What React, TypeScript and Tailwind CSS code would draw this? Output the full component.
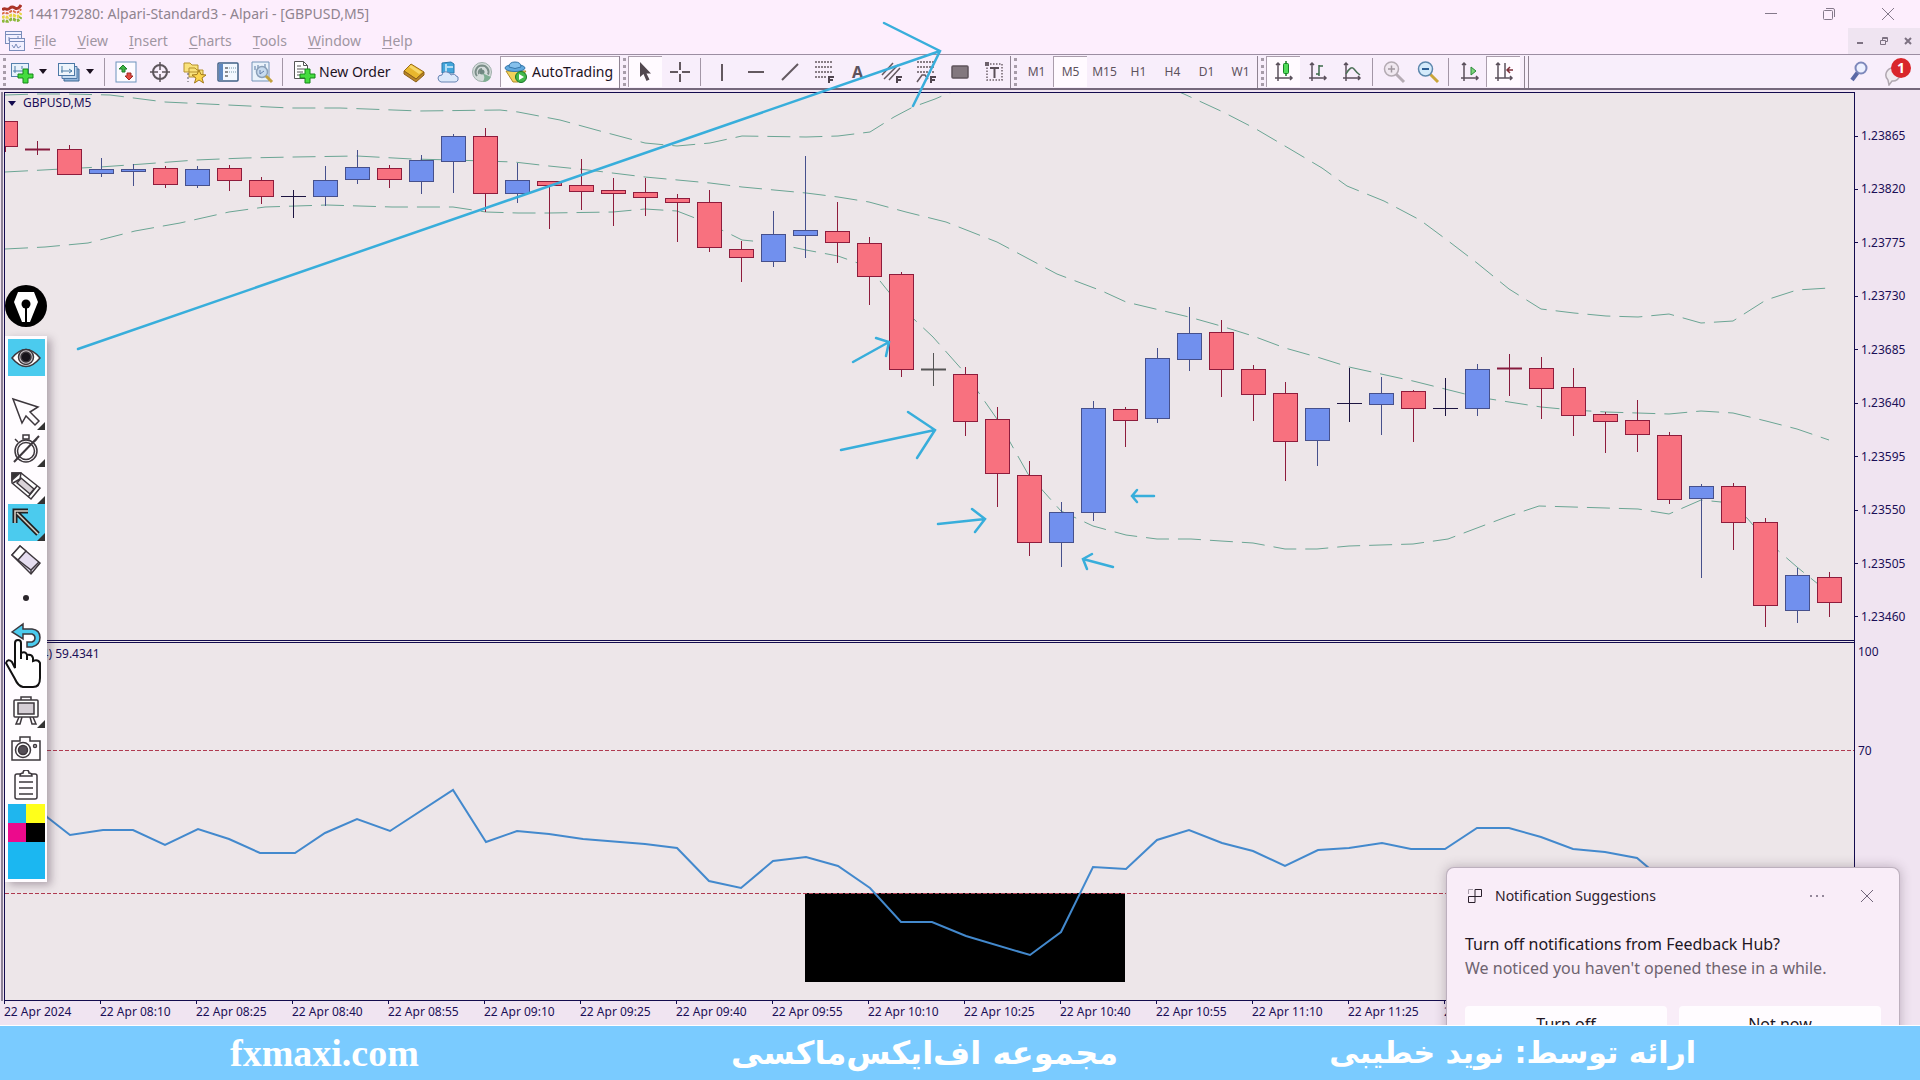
import React from 'react';

type Kind = 'up' | 'down' | 'flat' | 'grey' | 'redflat';

// kind, high, body top, body bottom, low
const CANDLES: [Kind, number, number, number, number][] = [
    ['down', 121, 121, 146, 152],
    ['redflat', 141, 149, 149, 155],
    ['down', 145, 149, 174, 174],
    ['up', 158, 169, 173, 177],
    ['up', 164, 169, 171, 186],
    ['down', 166, 168, 184, 188],
    ['up', 166, 169, 185, 188],
    ['down', 165, 168, 180, 191],
    ['down', 177, 180, 196, 204],
    ['flat', 190, 196, 196, 218],
    ['up', 166, 180, 196, 206],
    ['up', 150, 167, 179, 184],
    ['down', 165, 168, 179, 188],
    ['up', 155, 160, 181, 194],
    ['up', 134, 136, 161, 193],
    ['down', 128, 136, 193, 212],
    ['up', 163, 180, 193, 203],
    ['down', 181, 181, 185, 229],
    ['down', 159, 185, 191, 210],
    ['down', 178, 190, 193, 226],
    ['down', 178, 192, 197, 216],
    ['down', 194, 198, 202, 242],
    ['down', 190, 202, 247, 252],
    ['down', 241, 249, 257, 282],
    ['up', 211, 234, 261, 267],
    ['up', 156, 230, 235, 258],
    ['down', 202, 231, 242, 263],
    ['down', 237, 243, 276, 305],
    ['down', 272, 274, 369, 377],
    ['grey', 353, 369, 369, 386],
    ['down', 367, 374, 421, 436],
    ['down', 407, 419, 473, 507],
    ['down', 461, 475, 542, 556],
    ['up', 502, 512, 542, 567],
    ['up', 401, 408, 512, 521],
    ['down', 407, 409, 420, 447],
    ['up', 348, 358, 418, 423],
    ['up', 307, 333, 359, 371],
    ['down', 320, 332, 369, 397],
    ['down', 365, 369, 394, 421],
    ['down', 382, 393, 441, 481],
    ['up', 408, 408, 440, 466],
    ['flat', 368, 403, 403, 422],
    ['up', 377, 393, 404, 435],
    ['down', 390, 391, 408, 442],
    ['flat', 378, 408, 408, 416],
    ['up', 364, 369, 408, 416],
    ['redflat', 354, 368, 368, 396],
    ['down', 357, 368, 388, 419],
    ['down', 368, 387, 415, 436],
    ['down', 412, 414, 421, 453],
    ['down', 400, 420, 434, 452],
    ['down', 432, 435, 499, 504],
    ['up', 484, 486, 498, 578],
    ['down', 483, 486, 522, 550],
    ['down', 518, 522, 605, 627],
    ['up', 568, 575, 610, 623],
    ['down', 572, 577, 602, 617],
];

const UPPER =
    '5,95 37,94 69,94 110,95 165,102 228,105 290,108 340,108 420,111 500,110 518,112 560,120 600,131 645,143 677,146 710,143 742,136 806,137 838,136 870,132 894,117 913,107 935,99 949,93 1000,80 1150,80 1184,94 1223,112 1256,129 1290,149 1322,168 1347,186 1384,201 1420,220 1447,240 1477,263 1509,289 1541,309 1574,313 1606,316 1638,317 1669,314 1701,323 1733,321 1766,300 1797,290 1829,288';
const MIDDLE =
    '5,172 62,169 100,167 143,164 196,160 245,158 294,157 357,156 412,159 453,160 514,162 549,166 588,170 645,177 710,183 742,187 806,193 838,197 869,202 906,212 946,222 997,242 1057,274 1102,291 1126,302 1189,317 1221,326 1253,336 1285,348 1317,357 1349,367 1381,374 1413,381 1445,389 1477,397 1509,402 1541,407 1573,410 1606,412 1669,414 1701,411 1733,413 1766,421 1797,429 1829,440';
const LOWER =
    '5,249 45,247 88,243 135,231 180,223 229,212 265,207 327,205 392,207 453,207 486,212 518,213 549,213 613,212 645,209 677,211 695,218 726,232 742,240 773,243 806,250 838,256 869,267 884,286 901,307 933,337 965,373 997,419 1028,474 1061,511 1093,526 1126,535 1157,539 1191,539 1221,541 1253,543 1285,549 1317,549 1349,546 1413,544 1448,539 1477,528 1509,516 1539,506 1573,507 1638,509 1669,514 1701,500 1721,502 1747,518 1766,540 1797,567 1808,576 1823,588';
const RSI =
    '5,790 37,805 47,817 70,835 103,830 133,830 165,845 198,829 229,839 260,853 295,853 325,833 357,819 390,831 453,790 486,842 517,831 549,834 583,839 620,842 645,844 677,848 709,881 741,888 773,861 806,857 838,866 870,888 901,922 932,922 966,936 1030,955 1061,932 1093,867 1126,869 1157,840 1189,830 1222,843 1253,851 1285,866 1318,850 1349,848 1382,843 1411,849 1445,849 1477,828 1509,828 1541,837 1573,849 1605,852 1637,858 1669,885 1701,890';

const PRICES = ['1.23865', '1.23820', '1.23775', '1.23730', '1.23685', '1.23640', '1.23595', '1.23550', '1.23505', '1.23460'];
const TIMES = [
    '2024', '08:10', '08:25', '08:40', '08:55', '09:10', '09:25', '09:40', '09:55', '10:10',
    '10:25', '10:40', '10:55', '11:10', '11:25', '11:40', '11:55', '12:10', '12:25', '12:40',
];
const MENUS = ['File', 'View', 'Insert', 'Charts', 'Tools', 'Window', 'Help'];
const FRAMES = ['M1', 'M5', 'M15', 'H1', 'H4', 'D1', 'W1'];

const STROKES: Record<Kind, string> = {
    up: '#46508c',
    down: '#8e1c3c',
    flat: '#1c1440',
    grey: '#555555',
    redflat: '#861a3c',
};

/* ---------- small pieces ---------- */

const Icon: React.FC<{ children: React.ReactNode }> = ({ children }) => (
    <svg viewBox="0 0 24 24" className="h-6 w-6 shrink-0" fill="none" aria-hidden="true">
        {children}
    </svg>
);

const Tool: React.FC<{ label: string; active?: boolean; children: React.ReactNode }> = ({ label, active, children }) => (
    <button
        type="button"
        aria-label={label}
        className={`flex h-[31px] w-[34px] shrink-0 items-center justify-center border-l border-t text-xs text-[#5d525d] ${
            active ? 'border-[#aa9dac] bg-[#fffaff]' : 'border-transparent'
        }`}
    >
        {children}
    </button>
);

const Sep = () => (
    <div className="flex w-2 shrink-0 justify-center">
        <div className="h-7 w-px bg-[#a396a6]" />
    </div>
);

const Grip = () => (
    <div className="flex h-8 w-[9px] shrink-0 items-center justify-center border-l border-[#8f8392]">
        <div className="h-7 w-0 border-l-[3px] border-dotted border-[#a79ca9]" />
    </div>
);

const Caret = () => (
    <svg viewBox="0 0 8 5" className="h-[5px] w-2 shrink-0" aria-hidden="true">
        <path d="M0 0h8L4 5z" fill="#1b1020" />
    </svg>
);

const Plus = () => <path d="M13 9h5v5h5v4h-5v5h-5v-5H8v-4h5z" fill="#45dc3f" stroke="#16871b" />;

const Axes = () => (
    <path d="M6 3v18M3 18h17M4 5l2-2 2 2M18 16l2 2-2 2" stroke="#5b505c" strokeWidth="1.5" />
);

const FibMark = ({ x, y }: { x: number; y: number }) => (
    <path d={`M${x} ${y}v-6h5M${x} ${y - 3}h4`} stroke="#50454f" strokeWidth="2" />
);

/* ---------- window chrome ---------- */

const TitleBar = () => (
    <header className="flex h-7 items-center pl-[2px] pr-[2px] text-sm text-[#8f848f]">
        <svg viewBox="0 0 20 20" className="h-5 w-5" fill="none" aria-hidden="true">
            <path d="M0 6q2-2 4-1t4-1 5 0 6-3" stroke="#ab3328" strokeWidth="3" />
            <path d="M0 10q2-2 4-1t4-1 5 0 6-3" stroke="#d96c46" strokeWidth="2" strokeDasharray="3 1" />
            <path d="M0 14q2-2 4-1t4-1 5 0 6-3" stroke="#e6d645" strokeWidth="3" strokeDasharray="3 1" />
            <path d="M0 18q2-2 4-1t4-1 5 0 6-3" stroke="#8cb83b" strokeWidth="3" strokeDasharray="3 1" />
        </svg>
        <h1 className="ml-[6px] flex-1">144179280: Alpari-Standard3 - Alpari - [GBPUSD,M5]</h1>
        <button type="button" aria-label="Minimize" className="flex h-7 w-[58px] items-center justify-center">
            <svg viewBox="0 0 12 12" className="h-3 w-3" stroke="#84798a" aria-hidden="true"><path d="M0 5.5h12" /></svg>
        </button>
        <button type="button" aria-label="Restore" className="flex h-7 w-[58px] items-center justify-center">
            <svg viewBox="0 0 12 12" className="h-3 w-3" stroke="#84798a" fill="none" aria-hidden="true">
                <rect x=".5" y="2.5" width="9" height="9" rx="1" />
                <path d="M3 .5h7q1.5 0 1.5 1.5v7" />
            </svg>
        </button>
        <button type="button" aria-label="Close" className="flex h-7 w-[60px] items-center justify-center">
            <svg viewBox="0 0 12 12" className="h-3 w-3" stroke="#84798a" aria-hidden="true"><path d="M0 0l12 12M12 0L0 12" /></svg>
        </button>
    </header>
);

const MenuBar = () => (
    <nav className="flex h-[27px] items-center border-b border-[#9c8ea2] pl-[5px] text-sm text-[#a096a2]">
        <svg viewBox="0 0 20 20" className="h-5 w-5" fill="#f2f0ff" stroke="#7b8dbb" aria-hidden="true">
            <rect x=".5" y=".5" width="16" height="12" />
            <path d="M.5 3.5h16M4 10V6M13 7v-2" />
            <rect x="4.5" y="7.5" width="15" height="12" />
            <path d="M4.5 10.5h15M7 14l2 3 2-4 2 4 3-2" fill="none" />
        </svg>
        <div className="ml-[9px] flex flex-1 gap-[21px]">
            {MENUS.map((m) => (
                <button key={m} type="button">
                    <span className="underline underline-offset-2">{m.charAt(0)}</span>
                    {m.slice(1)}
                </button>
            ))}
        </div>
        <div className="flex h-full w-[72px] items-center justify-between bg-[#efe4f1] px-2">
            <button type="button" aria-label="Minimize chart">
                <svg viewBox="0 0 8 8" className="h-2 w-2" stroke="#7d7282" strokeWidth="2" aria-hidden="true"><path d="M1 6h6" /></svg>
            </button>
            <button type="button" aria-label="Restore chart">
                <svg viewBox="0 0 8 8" className="h-2 w-2" stroke="#7d7282" fill="none" aria-hidden="true">
                    <path d="M.5 3.5h5v4h-5zM2.5 3V.5h5v4H6M2.5 1.5h5" />
                </svg>
            </button>
            <button type="button" aria-label="Close chart">
                <svg viewBox="0 0 8 8" className="h-2 w-2" stroke="#7d7282" strokeWidth="2" aria-hidden="true"><path d="M1 1l6 6M7 1L1 7" /></svg>
            </button>
        </div>
    </nav>
);

const Toolbar = () => (
    <div className="flex h-[35px] items-center overflow-hidden border-b-2 border-[#75687c] bg-[#f8eefb]">
        <div className="flex w-2 shrink-0 justify-center">
            <div className="h-7 w-0 border-l-[3px] border-dotted border-[#a79ca9]" />
        </div>
        <button type="button" aria-label="New chart" className="flex w-[46px] shrink-0 items-center gap-[5px] pl-[2px]">
            <Icon>
                <rect x="1.5" y="3.5" width="17" height="13" fill="#e8f1fb" stroke="#5581ad" />
                <path d="M5 6v7M3 11h11M12 6v3" stroke="#4b7ca6" />
                <Plus />
            </Icon>
            <Caret />
        </button>
        <button type="button" aria-label="Profiles" className="flex w-[46px] shrink-0 items-center gap-[5px] pl-[3px]">
            <Icon>
                <path d="M7 9h15v12H7z" fill="#8fb4dc" stroke="#3f6893" />
                <path d="M5 6.5h15v12H5z" fill="#c8ddf2" stroke="#4c78a6" />
                <rect x="1.5" y="3.5" width="16" height="12" fill="#eef5fc" stroke="#4c78a6" />
                <path d="M5 6v7M4 11h11M12 9l3 2-3 2" stroke="#4b7ca6" />
            </Icon>
            <Caret />
        </button>
        <Sep />
        <Tool label="Market Watch">
            <Icon>
                <rect x="2" y="2" width="20" height="20" fill="#fdfbff" stroke="#6d93bd" />
                <path d="M9 5l4 4-2 0v3H8V9H5z" fill="#3eb444" stroke="#1d7d28" />
                <path d="M15 20l-4-4h2v-3h4v3h2z" fill="#e44a40" stroke="#a02823" />
            </Icon>
        </Tool>
        <Tool label="Data Window">
            <Icon>
                <circle cx="12" cy="12" r="7" stroke="#5d565c" strokeWidth="2" />
                <path d="M12 2v8M12 14v8M2 12h8M14 12h8" stroke="#5d565c" strokeWidth="1.5" />
            </Icon>
        </Tool>
        <Tool label="Navigator">
            <Icon>
                <path d="M2 3h6l2 2h6v7H2zM7 8h6l2 2h6v7H7z" fill="#f9e27c" stroke="#b5912d" />
                <path d="M6 13v9" stroke="#555" strokeDasharray="2 2" />
                <path d="M17 10l2 4.500 5 .5-4 3 1.500 5L17 20l-4.500 3 1.500-5-4-3 5-.5z" fill="#fbd54c" stroke="#a37b1e" />
            </Icon>
        </Tool>
        <Tool label="Terminal">
            <Icon>
                <rect x="2" y="3" width="20" height="18" rx="1" fill="#f4f8ff" stroke="#406087" strokeWidth="1.5" />
                <path d="M3 4h4v16H3z" fill="#5f88c0" />
                <path d="M9 8h3M9 12h3M9 16h3" stroke="#222" />
                <path d="M13 8h8M13 12h8" stroke="#79a" strokeDasharray="1 1" />
            </Icon>
        </Tool>
        <Tool label="Strategy Tester">
            <Icon>
                <path d="M2 2h17v19H2z" fill="#eaf2fb" stroke="#7594b8" />
                <path d="M5 6v4M8 5v5M15 4v6" stroke="#587ba4" />
                <circle cx="12" cy="12" r="5.5" fill="#c8dbef" stroke="#8ba0b9" strokeWidth="1.5" />
                <path d="M10 10v4l4-3" stroke="#637eaa" />
                <path d="M16 16l6 6" stroke="#c2a13e" strokeWidth="3" />
            </Icon>
        </Tool>
        <Sep />
        <button type="button" className="flex w-[110px] shrink-0 items-center gap-[3px] pl-[6px] text-sm whitespace-nowrap text-[#1d121f]">
            <Icon>
                <path d="M2.5 1.5h9l4 4v13h-13z" fill="#fff" stroke="#555" />
                <path d="M11.5 1.5v4h4M5 6h4M5 9h8M5 12h6M5 15h3" stroke="#555" />
                <Plus />
            </Icon>
            New Order
        </button>
        <Tool label="MetaEditor">
            <Icon>
                <path d="M9 4l13 8-8 7L2 11z" fill="#e8b72e" stroke="#9b6d16" />
                <path d="M2 11v3l12 8 8-7v-3l-8 7z" fill="#b9852a" stroke="#8d6017" />
                <path d="M9 5l11 7-3 2-10-7z" fill="#f7d768" />
            </Icon>
        </Tool>
        <Tool label="Virtual Hosting">
            <Icon>
                <path d="M6 3l9-1 3 2v9H6z" fill="#43a6dc" stroke="#2a78aa" />
                <path d="M10 4v9M11 7h6" stroke="#d9f0fb" strokeWidth="1.5" />
                <path d="M5 22q-3-1-3-4t4-3q1-4 5-3t4 3q4-2 5 1 3 0 2 4-1 2-3 2z" fill="#dce8fa" stroke="#6683b3" />
            </Icon>
        </Tool>
        <Tool label="Signals">
            <Icon>
                <circle cx="12" cy="12" r="9.5" fill="#d5dcdb" stroke="#9eaeaa" />
                <path d="M12 5.500a6.500 6.500 0 0 0-5 10.500M12 5.500a6.500 6.500 0 0 1 6 9M12 9a3.500 3.500 0 0 0-3 5" stroke="#7b8d88" strokeWidth="2" />
                <circle cx="12" cy="12" r="2.5" fill="#6f8781" />
                <path d="M12 13q4 3 1 9 6 0 8-5" fill="#7fae93" />
            </Icon>
        </Tool>
        <button
            type="button"
            className="ml-[2px] flex h-[31px] w-[119px] shrink-0 items-center gap-[4px] border-l border-t border-[#aa9dac] bg-[#fffaff] pl-[3px] text-sm text-[#1d121f]"
        >
            <Icon>
                <path d="M2 11h20l-8 11H9z" fill="#f1d25a" stroke="#b08b2d" />
                <ellipse cx="11" cy="8" rx="10" ry="3.5" fill="#62a9de" stroke="#3476ab" />
                <path d="M5 7q0-5 6-5t6 5q-6 3-12 0z" fill="#85c0ec" stroke="#3476ab" />
                <circle cx="17" cy="17" r="5.5" fill="#43b84a" stroke="#187527" />
                <path d="M15 14v6l5-3z" fill="#fff" />
            </Icon>
            AutoTrading
        </button>
        <Grip />
        <Tool label="Cursor" active>
            <Icon><path d="M6 2v15l3.500-3 3 7 3-1.500-3-6H17z" fill="#52474f" /></Icon>
        </Tool>
        <Tool label="Crosshair">
            <Icon><path d="M12 2v8M12 14v8M2 12h8M14 12h8" stroke="#63585f" strokeWidth="2" /></Icon>
        </Tool>
        <Sep />
        <Tool label="Vertical line">
            <Icon><path d="M12 4v17" stroke="#63585f" strokeWidth="2" /></Icon>
        </Tool>
        <Tool label="Horizontal line">
            <Icon><path d="M4 12h16" stroke="#63585f" strokeWidth="2" /></Icon>
        </Tool>
        <Tool label="Trendline">
            <Icon><path d="M4 20L20 4" stroke="#63585f" strokeWidth="2" /></Icon>
        </Tool>
        <Tool label="Fibonacci retracement">
            <Icon>
                <path d="M3 2h18M3 7h18M3 12h18M3 17h11" stroke="#63585f" strokeWidth="1.5" strokeDasharray="2 1" />
                <FibMark x={17} y={23} />
            </Icon>
        </Tool>
        <Tool label="Text">
            <span className="text-base font-bold">A</span>
        </Tool>
        <Tool label="Fibonacci channel">
            <Icon>
                <path d="M2 15L13 3M4 19L18 5M9 20L20 8" stroke="#63585f" strokeWidth="1.5" />
                <FibMark x={17} y={23} />
            </Icon>
        </Tool>
        <Tool label="Fibonacci fan">
            <Icon>
                <path d="M3 2h18M3 7h18M3 12h18" stroke="#63585f" strokeWidth="1.5" strokeDasharray="2 1" />
                <path d="M3 22l5-7h3l3 4" stroke="#63585f" strokeWidth="1.5" />
                <FibMark x={17} y={23} />
            </Icon>
        </Tool>
        <Tool label="Rectangle">
            <Icon><rect x="4" y="6" width="16" height="12" rx="1" fill="#83787f" stroke="#5f545c" strokeWidth="1.5" /></Icon>
        </Tool>
        <Tool label="Text label">
            <Icon>
                <rect x="5" y="4" width="15" height="16" stroke="#6d626b" strokeWidth="1.5" strokeDasharray="1.5 1.5" />
                <path d="M8 8h9M12.5 8v10" stroke="#5a4f58" strokeWidth="2" />
                <path d="M3 2h4v4H3z" fill="#6d626b" />
            </Icon>
        </Tool>
        <Grip />
        {FRAMES.map((f) => (
            <Tool key={f} label={f} active={f === 'M5'}>{f}</Tool>
        ))}
        <Grip />
        <Tool label="Candlesticks" active>
            <Icon>
                <Axes />
                <path d="M14 1v15" stroke="#157a22" strokeWidth="1.5" />
                <rect x="11.5" y="3.5" width="5" height="10" rx="1" fill="#4fdb58" stroke="#168425" />
            </Icon>
        </Tool>
        <Tool label="Bar chart">
            <Icon><Axes /><path d="M13 5v11M13 6h4M10 14h3" stroke="#3b6b49" strokeWidth="1.5" /></Icon>
        </Tool>
        <Tool label="Line chart">
            <Icon><Axes /><path d="M6 14q5-9 8-5t6 6" stroke="#4d7157" strokeWidth="1.5" /></Icon>
        </Tool>
        <Sep />
        <Tool label="Zoom in">
            <Icon>
                <path d="M14 14l8 8" stroke="#b5abb4" strokeWidth="3" />
                <circle cx="9.500" cy="9" r="7" fill="#f0e8f0" stroke="#b3aab2" strokeWidth="1.5" />
                <path d="M6 9h7M9.500 5.500v7" stroke="#a198a0" strokeWidth="1.5" />
            </Icon>
        </Tool>
        <Tool label="Zoom out">
            <Icon>
                <path d="M14 14l8 8" stroke="#caa53a" strokeWidth="3" />
                <circle cx="9.500" cy="9" r="7" fill="#d4eafb" stroke="#5c87ad" strokeWidth="1.5" />
                <path d="M6 9h7" stroke="#2d5f96" strokeWidth="2" />
            </Icon>
        </Tool>
        <Sep />
        <Tool label="Auto scroll">
            <Icon><Axes /><path d="M13 7l5 4-5 4z" fill="#7cd67c" stroke="#2b8a38" /></Icon>
        </Tool>
        <Tool label="Chart shift" active>
            <Icon>
                <Axes />
                <path d="M13 3v15" stroke="#5b505c" strokeWidth="1.5" />
                <path d="M21 10h-6M18 7l-3 3 3 3" stroke="#7e2f3a" strokeWidth="1.5" />
            </Icon>
        </Tool>
        <div className="ml-[4px] h-8 w-[5px] shrink-0 border-x border-[#8f8392]" />
        <div className="flex flex-1 items-center justify-end gap-[12px] pr-[9px]">
            <button type="button" aria-label="Search">
                <Icon>
                    <path d="M11 12l-6 8" stroke="#5c69a6" strokeWidth="4" />
                    <circle cx="14" cy="8" r="5.500" fill="#edf0ff" stroke="#7d88bb" strokeWidth="2" />
                </Icon>
            </button>
            <button type="button" aria-label="Notifications" className="relative h-7 w-[28px]">
                <svg viewBox="0 0 20 20" className="mt-[8px] h-5 w-5" fill="#f0ebf0" stroke="#b0a7b0" strokeWidth="1.5" aria-hidden="true">
                    <path d="M10 2a7 7 0 0 0-5 12l1 5 3-4a7 7 0 0 0 8-6" />
                </svg>
                <span className="absolute right-0 top-0 flex h-5 w-5 items-center justify-center rounded-full bg-[#d9262b] text-sm leading-none font-bold text-white">
                    1
                </span>
            </button>
        </div>
    </div>
);

/* ---------- charts ---------- */

const PricePane = () => (
    <div className="relative h-[549px] border-y border-[#130b4e]">
        <svg viewBox="5 93 1849 547" preserveAspectRatio="none" className="h-full w-full" aria-label="GBPUSD candles">
            <g fill="none" stroke="#6ba594" strokeDasharray="23 9">
                <polyline points={UPPER} />
                <polyline points={MIDDLE} />
                <polyline points={LOWER} />
            </g>
            {CANDLES.map(([kind, high, top, bottom, low], i) => {
                const x = 5 + i * 32;
                const body = kind === 'up' || kind === 'down';
                return (
                    <g key={i} stroke={STROKES[kind]}>
                        <path d={`M${x + 0.5} ${high}V${low}`} />
                        {body ? (
                            <rect
                                x={x - 11.5}
                                y={top + 0.5}
                                width="24"
                                height={bottom - top}
                                fill={kind === 'up' ? '#7190ee' : '#f8717f'}
                            />
                        ) : (
                            <path d={`M${x - 12} ${top + 0.5}h25`} strokeWidth={kind === 'flat' ? 1 : 2} />
                        )}
                    </g>
                );
            })}
        </svg>
        <div className="absolute left-[3px] top-[2px] flex items-center gap-[7px] text-xs text-[#1b0f57]">
            <svg viewBox="0 0 8 5" className="h-[5px] w-2" aria-hidden="true"><path d="M0 0h8L4 5z" fill="#130b4e" /></svg>
            GBPUSD,M5
        </div>
    </div>
);

const RsiPane = () => (
    <div className="relative mt-px h-[359px] border-y border-[#130b4e]">
        <svg viewBox="5 643 1849 357" preserveAspectRatio="none" className="h-full w-full" aria-label="RSI">
            <rect x="805" y="893" width="320" height="89" fill="#000" />
            <path d="M5 750.5H1854M5 893.5H1854" stroke="#b03a50" strokeDasharray="4 2" />
            <polyline points={RSI} fill="none" stroke="#4389cd" strokeWidth="2" />
        </svg>
        <div className="absolute left-[8px] top-[3px] text-xs text-[#1b0f57]">RSI(14) 59.4341</div>
    </div>
);

const Tick = () => <span className="h-px w-[3px] bg-[#130b4e]" />;

const AxisLabels = () => (
    <div className="w-[66px] shrink-0 border-l border-[#130b4e] text-xs text-[#1b0f57]">
        <div className="flex h-[549px] flex-col justify-between pb-[16px] pt-[36px]">
            {PRICES.map((p) => (
                <div key={p} className="flex items-center gap-[3px]"><Tick />{p}</div>
            ))}
        </div>
        <div className="flex h-[360px] flex-col gap-[83px] pl-[3px] pt-[3px]">
            <div>100</div>
            <div>70</div>
        </div>
    </div>
);

const TimeAxis = () => (
    <div className="flex h-6 overflow-hidden pl-[4px] text-xs text-[#1b0f57]">
        {TIMES.map((t) => (
            <div key={t} className="w-24 shrink-0">
                <div className="h-[3px] border-l border-[#130b4e]" />
                22 Apr {t}
            </div>
        ))}
    </div>
);

/* ---------- screen pen ---------- */

const PenCell: React.FC<{ label: string; active?: boolean; menu?: boolean; children?: React.ReactNode }> = ({
    label,
    active,
    menu,
    children,
}) => (
    <button
        type="button"
        aria-label={label}
        className={`relative flex h-[37px] w-[37px] items-center justify-center ${active ? 'bg-[#4bcbee]' : ''}`}
    >
        <svg viewBox="0 0 32 32" className="h-8 w-8" fill="none" stroke="#3d373d" strokeWidth="1.5" aria-hidden="true">
            {children}
        </svg>
        {menu && (
            <svg viewBox="0 0 8 8" className="absolute bottom-0 right-0 h-2 w-2" aria-hidden="true"><path d="M8 0v8H0z" fill="#333" /></svg>
        )}
    </button>
);

const PenPalette = () => (
    <aside className="absolute left-[5px] top-[285px] w-[42px]">
        <svg viewBox="0 0 42 42" className="mb-[9px] h-[42px] w-[42px]" aria-hidden="true">
            <circle cx="21" cy="21" r="21" fill="#000" />
            <path d="M13 7h16l4 10-8 20h-3V21h-2v16h-3L9 17z" fill="#fff" />
            <circle cx="21" cy="19" r="4.5" fill="#000" />
        </svg>
        <div className="flex flex-col items-center bg-[#fffcff] py-[3px] shadow-[4px_3px_8px_rgba(60,40,60,0.35)]">
            <PenCell label="Show ink" active>
                <path d="M2 16q14-17 28 0-14 17-28 0z" fill="#fff" />
                <circle cx="16" cy="15" r="7.5" fill="#cfc9ce" />
                <circle cx="16" cy="15" r="5" fill="#16121a" />
            </PenCell>
            <div className="h-[17px]" />
            <PenCell label="Select" menu>
                <path d="M3 3l9 24 4-7 9 9 4-4-9-9 8-5z" />
            </PenCell>
            <PenCell label="Fading ink" menu>
                <circle cx="16" cy="18" r="11" />
                <circle cx="16" cy="18" r="8.5" />
                <path d="M13 2h6v4h-6zM5 6l3 3M27 6l-3 3" />
                <path d="M4 29L29 3" strokeWidth="2" />
            </PenCell>
            <PenCell label="Pen" menu>
                <path d="M2 3h9l19 15-9 11L2 13z" fill="#fff" />
                <path d="M2 3h8l-8 7z" fill="#333" />
                <path d="M7 13l13 11 4-5-13-11z" fill="#d9d3d8" />
                <path d="M11 3l-1 6-7 4M18 27l9-11" />
            </PenCell>
            <PenCell label="Arrow" active menu>
                <path d="M28 27L7 6M5 16V4h13" stroke="#222" strokeWidth="5" />
                <path d="M28 27L7 6M5 16V4h13" stroke="#d9d4c9" />
            </PenCell>
            <PenCell label="Eraser">
                <path d="M2 11l8-9 20 17-9 11z" fill="#e5ddf0" />
                <path d="M2 11l8-9 6 5-8 9z" fill="#fff" />
                <path d="M8 16l13 10 8-8M21 26v4" />
            </PenCell>
            <PenCell label="Pen size">
                <circle cx="16" cy="17" r="3" fill="#2b262b" stroke="none" />
            </PenCell>
            <div className="h-[2px]" />
            <PenCell label="Undo">
                <path d="M2 12l11-8v5h9q8 1 8 8.500T22 27h-5v-5h5q3-1 3-4t-3-4h-9v5z" fill="#4bcbee" />
            </PenCell>
            <div className="h-[37px]" />
            <PenCell label="Board" menu>
                <path d="M11 7V3h10v4M9 23l-3 7h4l2-7M23 23l3 7h-4l-2-7" />
                <rect x="4" y="6" width="24" height="17" rx="1" fill="#fff" />
                <rect x="8" y="9" width="16" height="11" fill="#d5ced5" />
            </PenCell>
            <div className="h-[2px]" />
            <PenCell label="Screenshot">
                <path d="M2 8h8V4h10v4h10v19H2z" />
                <circle cx="13" cy="17" r="7.5" fill="#fff" />
                <circle cx="13" cy="17" r="4.5" fill="#544e56" />
                <circle cx="25" cy="13" r="1.5" />
            </PenCell>
            <PenCell label="Clipboard">
                <rect x="5" y="4" width="22" height="25" rx="2" />
                <path d="M10 6q0-3 3-3 0-3 3-3t3 3q3 0 3 3z" fill="#fff" />
                <path d="M9 12h14M9 18h14M9 24h14" />
            </PenCell>
            <div className="grid w-[37px] grid-cols-2">
                <button type="button" aria-label="Cyan" className="h-[19px] bg-[#1fb6ee]" />
                <button type="button" aria-label="Yellow" className="h-[19px] bg-[#ffff1a]" />
                <button type="button" aria-label="Magenta" className="h-[19px] bg-[#ec0a8c]" />
                <button type="button" aria-label="Black" className="h-[19px] bg-black" />
            </div>
            <div className="h-[37px] w-[37px] bg-[#1bb7f1]" />
        </div>
        {/* mouse pointer resting on the undo button */}
        <svg viewBox="0 0 38 50" className="absolute left-0 top-[353px] h-[50px] w-[38px]" fill="#fff" stroke="#111" strokeWidth="2" aria-hidden="true">
            <path d="M10 30V5q0-3 3-3t3 3v16-6q5-2 6 2v5-5q5-1 6 3v3q5-2 7 2v15q0 9-7 9H18q-5-1-8-8L1 25q2-5 6-1z" />
        </svg>
    </aside>
);

const Ink = () => (
    <svg viewBox="0 0 1920 1080" preserveAspectRatio="none" className="pointer-events-none absolute inset-0 h-full w-full" fill="none" stroke="#38aedb" strokeWidth="2.5" strokeLinecap="round" aria-hidden="true">
        <path d="M78 349L940 51M884 23L940 51L913 106" />
        <path d="M853 362L889 342M876 338L889 342L886 356" />
        <path d="M841 450L935 430M908 412L935 430L917 458" />
        <path d="M938 524L985 519M972 509L985 519L975 532" />
        <path d="M1113 567L1083 559M1092 554L1083 559L1087 569" />
        <path d="M1154 496H1132M1137 490L1132 496L1137 502" />
    </svg>
);

/* ---------- toast and banner ---------- */

const Toast = () => (
    <section className="absolute -bottom-[55px] right-[20px] h-[213px] w-[454px] rounded-t-lg border border-b-0 border-[#bdb0be] bg-[#f9edf8] px-[18px] pt-[14px] shadow-[0_0_12px_rgba(60,40,60,0.3)]">
        <div className="flex h-7 items-center text-sm text-[#2b202c]">
            <svg viewBox="0 0 14 14" className="ml-[3px] mr-[13px] h-[14px] w-[14px]" fill="none" stroke="#2b202c" aria-hidden="true">
                <path d="M7 .5H13.5V7.5H.5V13.5H7V.5" />
                <path d="M.5 5V.5H5" stroke="#a89daa" />
            </svg>
            <h2 className="flex-1">Notification Suggestions</h2>
            <button type="button" aria-label="More" className="mr-[37px]">
                <svg viewBox="0 0 14 4" className="h-1 w-[14px]" fill="#71657a" aria-hidden="true">
                    <circle cx="1" cy="2" r="1" /><circle cx="7" cy="2" r="1" /><circle cx="13" cy="2" r="1" />
                </svg>
            </button>
            <button type="button" aria-label="Dismiss" className="mr-[8px]">
                <svg viewBox="0 0 12 12" className="h-3 w-3" stroke="#71657a" aria-hidden="true"><path d="M0 0l12 12M12 0L0 12" /></svg>
            </button>
        </div>
        <p className="mt-[22px] text-base text-[#211623]">Turn off notifications from Feedback Hub?</p>
        <p className="text-base text-[#6e636f]">We noticed you haven't opened these in a while.</p>
        <div className="mt-[26px] flex gap-3 text-base text-[#211623]">
            <button type="button" className="h-9 flex-1 rounded bg-[#fffcff]">Turn off</button>
            <button type="button" className="h-9 flex-1 rounded bg-[#fffcff]">Not now</button>
        </div>
    </section>
);

const Banner = () => (
    <footer className="relative flex h-[55px] items-center justify-between border-t border-white bg-[#7acbff] pl-[230px] pr-[224px] text-white">
        <span className="font-['Liberation_Serif',serif] text-[38px] leading-none font-bold">fxmaxi.com</span>
        <span dir="rtl" className="ml-[312px] mr-auto font-['DejaVu_Sans',sans-serif] text-[32px] leading-none font-bold">مجموعه اف‌ایکس‌ماکسی</span>
        <span dir="rtl" className="font-['DejaVu_Sans',sans-serif] text-[30px] leading-none font-bold">ارائه توسط: نوید خطیبی</span>
    </footer>
);

export default function App() {
    return (
        <div className="relative flex min-h-screen flex-col overflow-hidden bg-[#fdeefd] font-['Noto_Sans','Open_Sans',sans-serif]">
            <TitleBar />
            <MenuBar />
            <Toolbar />
            <main className="relative flex-1 bg-[#f0e4f1] pt-[2px]">
                <div className="ml-px flex border-l-2 border-[#8d8296] pl-px">
                    <div className="min-w-0 flex-1 border-l border-[#130b4e] bg-[#ede6e9]">
                        <PricePane />
                        <RsiPane />
                    </div>
                    <AxisLabels />
                </div>
                <TimeAxis />
                <Toast />
            </main>
            <Banner />
            <PenPalette />
            <Ink />
        </div>
    );
}
